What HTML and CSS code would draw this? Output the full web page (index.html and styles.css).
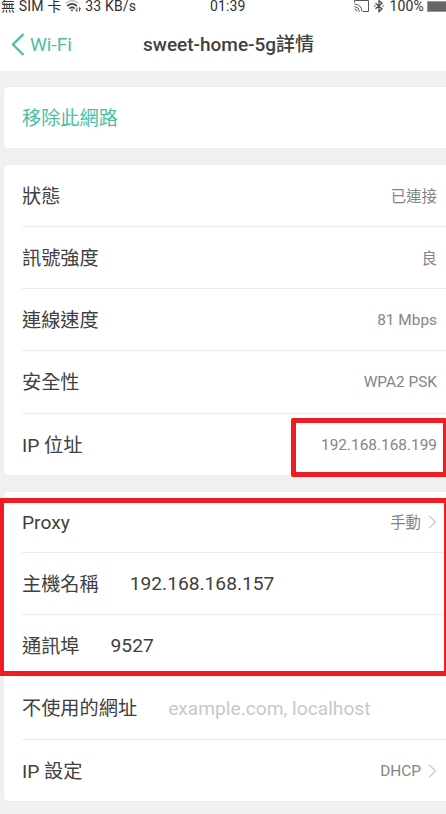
FILE: index.html
```html
<!DOCTYPE html>
<html lang="zh-Hant">
<head>
<meta charset="utf-8">
<title>sweet-home-5g詳情</title>
<link rel="stylesheet" href="styles.css">
</head>
<body>
<div class="screen">
  <div class="status">
    <div class="status-left"><span class="carrier">無 SIM 卡</span>
      <svg class="wifi" width="17" height="13" viewBox="0 0 17 13" fill="none">
        <path d="M.7 3.400Q7-2 13.300 3.400" stroke="#c4c4c4" stroke-width="1.7"/>
        <path d="M2.200 6Q7 1.600 11.800 6M4.300 8.500Q7 6 9.700 8.500" stroke="#444" stroke-width="1.7"/>
        <path d="M5.500 10Q7 8.800 8.500 10L7 11.600Z" fill="#444"/>
        <path d="M12 7.500v4M10.500 9.500l1.500 2M14.500 11.500v-4l1.500 2" stroke="#555"/>
      </svg>
      <span>33 KB/s</span></div>
    <div class="clock">01:39</div>
    <div class="status-right">
      <svg class="cast" width="15" height="13" viewBox="0 0 15 13" fill="none" stroke="#555">
        <path d="M.5 2.500V.500h14v11H9M.5 4Q7.500 4.500 8 11.500M.5 6.500Q5 7 5.500 11.500M.5 9Q3 9.500 3 11.500"/>
      </svg>
      <svg class="bt" width="12" height="13" viewBox="0 0 12 13" fill="none" stroke="#444" stroke-width="1.200">
        <path d="M2.500 3.200 9 8.800 6 11.700V.600L9 3.200 2.500 8.800M.8 6h1.700M9.500 6h1.700"/>
      </svg>
      <span>100%</span><i class="battery"></i>
    </div>
  </div>
  <header class="nav">
    <a class="back"><svg width="14" height="23" viewBox="0 0 14 23" fill="none" stroke="#4bbfa5" stroke-width="2.300"><path d="M12.500 1 2 11.500 12.500 22"/></svg><span>Wi-Fi</span></a>
    <h1>sweet-home-5g詳情</h1>
  </header>
  <main>
    <section class="card single"><div class="row forget">移除此網路</div></section>
    <section class="card info">
      <div class="row"><span>狀態</span><span class="value">已連接</span></div>
      <div class="row"><span>訊號強度</span><span class="value">良</span></div>
      <div class="row"><span>連線速度</span><span class="value latin">81 Mbps</span></div>
      <div class="row tall"><span>安全性</span><span class="value latin">WPA2 PSK</span></div>
      <div class="row short"><span>IP 位址</span><span class="value latin">192.168.168.199</span></div>
      <div class="mark mark-ip"></div>
    </section>
    <section class="card proxy">
      <div class="row short"><span class="latin">Proxy</span><span class="value">手動</span><svg class="chev" width="9" height="14" viewBox="0 0 9 14"><path d="M1 .800 7.500 7 1 13.200"/></svg></div>
      <div class="row"><span>主機名稱</span><span class="field">192.168.168.157</span></div>
      <div class="row"><span>通訊埠</span><span class="field">9527</span></div>
      <div class="row tall"><span>不使用的網址</span><span class="field hint">example.com, localhost</span></div>
      <div class="row short"><span>IP 設定</span><span class="value latin">DHCP</span><svg class="chev" width="9" height="14" viewBox="0 0 9 14"><path d="M1 .800 7.500 7 1 13.200"/></svg></div>
      <div class="mark mark-proxy"></div>
    </section>
  </main>
</div>
</body>
</html>
```
FILE: styles.css
```css
* { box-sizing: border-box; }
body { margin: 0; background: #f0f0f0; color: #404040; font-family: Roboto, "Noto Sans CJK TC", sans-serif; }
.screen { width: 446px; }
.status { display: grid; grid-template-columns: 210px auto 1fr; height: 14px; background: #fff; color: #303030; font-size: 14px; line-height: 12px; letter-spacing: .15px; white-space: nowrap; }
.status-left, .status-right { display: flex; align-items: center; height: 12px; }
.status-left { padding-left: 1px; }
.wifi { margin: 0 3px 0 4px; }
.status-right { justify-content: flex-end; }
.bt { margin: 0 5px 0 4px; }
.battery { width: 19px; height: 11px; margin-left: 3px; background: #666; border: 1px solid #999; border-right: 0; }
.nav { display: grid; grid-template-columns: 143px 1fr; align-items: center; height: 57px; background: #fff; }
.back { display: flex; align-items: center; gap: 5px; padding: 4px 0 0 11px; color: #4bbfa5; font-size: 19px; }
h1 { margin: 4px 0 0; font-size: 19px; font-weight: 500; line-height: 28px; white-space: nowrap; }
main { display: flex; flex-direction: column; padding: 16px 0 13px 4px; }
.card { position: relative; background: #fff; border-radius: 4px 0 0 4px; padding-left: 18px; box-shadow: 0 0 1px #ddd; }
.info { margin-top: 17px; }
.proxy { margin-top: 17px; }
.row { display: flex; align-items: center; height: 62px; padding: 0 9px 2px 0; border-bottom: 1px solid #ececec; font-size: 19.2px; white-space: nowrap; }
.single .row { height: 61px; }
.row.tall { height: 63px; }
.row.short { height: 61px; }
.row:nth-child(5), .forget { border-bottom: 0; }
.forget { color: #4bbfa5; }
.value { margin-left: auto; font-size: 15.4px; color: #858585; }
.latin, .field, .chev { margin-top: 2px; }
.field { margin-left: 31px; }
.hint { color: #c8c8c8; }
.chev { margin-left: 7px; fill: none; stroke: #ccc; stroke-width: 1.3; }
.mark { position: absolute; border: 5px solid #ee1c24; }
.mark-ip { left: 287px; top: 253px; width: 156px; height: 59px; border-right-width: 4px; border-radius: 2px; }
.mark-proxy { left: -4px; top: 6px; width: 446px; height: 178px; border-width: 5px 2px 5px 4px; }
```
